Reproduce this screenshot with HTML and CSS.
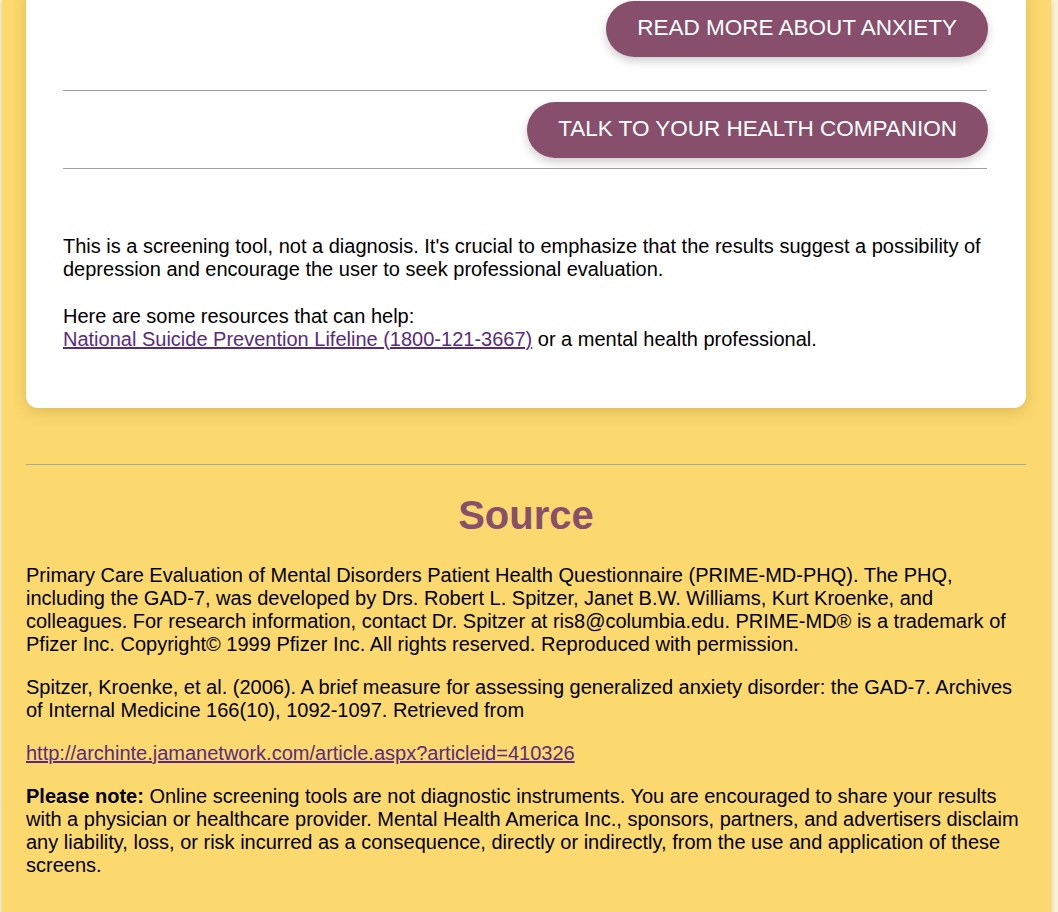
FILE: index.html
```html
<!DOCTYPE html>
<html lang="en">
<head>
<meta charset="utf-8">
<title>GAD-7 Result</title>
<link rel="stylesheet" href="styles.css">
</head>
<body>
<div class="page">
  <section class="card">
    <div class="action-row">
      <a class="pill-btn" href="#">READ MORE ABOUT ANXIETY</a>
    </div>
    <hr class="rule">
    <div class="action-row second">
      <a class="pill-btn" href="#">TALK TO YOUR HEALTH COMPANION</a>
    </div>
    <hr class="rule">
    <div class="notice">
      <p>This is a screening tool, not a diagnosis. It's crucial to emphasize that the results suggest a possibility of depression and encourage the user to seek professional evaluation.</p>
      <p>Here are some resources that can help:<br><a class="link" href="#">National Suicide Prevention Lifeline (1800-121-3667)</a> or a mental health professional.</p>
    </div>
  </section>

  <hr class="source-rule">
  <section class="source">
    <h2 class="source-title">Source</h2>
    <p>Primary Care Evaluation of Mental Disorders Patient Health Questionnaire (PRIME-MD-PHQ). The PHQ, including the GAD-7, was developed by Drs. Robert L. Spitzer, Janet B.W. Williams, Kurt Kroenke, and colleagues. For research information, contact Dr. Spitzer at ris8@columbia.edu. PRIME-MD® is a trademark of Pfizer Inc. Copyright© 1999 Pfizer Inc. All rights reserved. Reproduced with permission.</p>
    <p>Spitzer, Kroenke, et al. (2006). A brief measure for assessing generalized anxiety disorder: the GAD-7. Archives of Internal Medicine 166(10), 1092-1097. Retrieved from</p>
    <p><a class="link" href="#">http://archinte.jamanetwork.com/article.aspx?articleid=410326</a></p>
    <p><strong>Please note:</strong> Online screening tools are not diagnostic instruments. You are encouraged to share your results with a physician or healthcare provider. Mental Health America Inc., sponsors, partners, and advertisers disclaim any liability, loss, or risk incurred as a consequence, directly or indirectly, from the use and application of these screens.</p>
  </section>
</div>
</body>
</html>
```
FILE: styles.css
```css
html {
  background: #faf5d6;
}
body {
  margin: 0;
  font-family: "Liberation Sans", Arial, sans-serif;
  font-size: 20px;
  line-height: 23px;
  color: #000;
}
.page {
  margin-left: 2px;
  width: 1000px;
  padding: 0 25px 40px 24px;
  background: #fbd96e;
  box-shadow: 0 0 6px rgba(150, 120, 30, 0.35);
  overflow: hidden;
}
.card {
  margin-top: -14px;
  background: #fff;
  border-radius: 12px;
  padding: 15px 39px 57px 37px;
  box-shadow: 0 4px 14px rgba(140, 100, 20, 0.25);
}
.action-row {
  display: flex;
  justify-content: flex-end;
  margin-right: -1px;
  padding-bottom: 33px;
}
.action-row.second {
  padding-top: 11px;
  padding-bottom: 10px;
}
.pill-btn {
  display: inline-flex;
  align-items: center;
  box-sizing: border-box;
  height: 56px;
  padding: 0 31px 3px 31px;
  border-radius: 28px;
  background: #874f6b;
  color: #fff;
  font-size: 22.5px;
  text-decoration: none;
  box-shadow: 0 4px 10px rgba(0, 0, 0, 0.2);
}
.rule {
  margin: 0;
  border: 0;
  border-top: 1px solid #a0a0a0;
}
.notice {
  padding-top: 66px;
}
.notice p {
  margin: 0 0 24px;
}
.notice p:last-child {
  margin-bottom: 0;
}
.link {
  color: #5a2a82;
}
.source-rule {
  margin: 56px 0 0;
  border: 0;
  border-top: 1px solid #a7a7a7;
}
.source-title {
  margin: 27px 0 26px;
  text-align: center;
  font-size: 40px;
  line-height: 46px;
  font-weight: bold;
  color: #874f6b;
}
.source p {
  margin: 0 0 20px;
}
```
